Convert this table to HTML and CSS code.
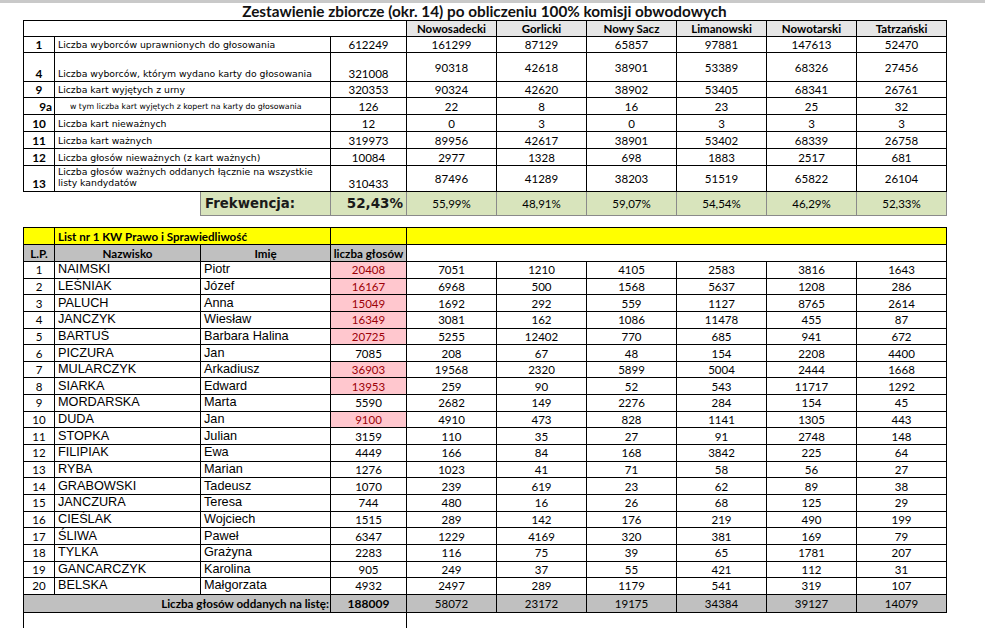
FILE: index.html
```html
<!DOCTYPE html>
<html lang="pl">
<head>
<meta charset="utf-8">
<title>Zestawienie zbiorcze</title>
<link rel="stylesheet" href="styles.css">
</head>
<body>
<div class="topbar"></div>
<div class="sheet">
  <div class="title">Zestawienie zbiorcze (okr. 14) po obliczeniu 100% komisji obwodowych</div>
  <table class="t1">
    <colgroup><col class="c-lp"><col class="c-naz"><col class="c-imie"><col class="c-tot"><col class="c-d"><col class="c-d"><col class="c-d"><col class="c-d"><col class="c-d"><col class="c-d"></colgroup>
    <tr class="h16">
      <td colspan="4"></td>
      <td class="dh">Nowosadecki</td><td class="dh">Gorlicki</td><td class="dh">Nowy Sacz</td><td class="dh">Limanowski</td><td class="dh">Nowotarski</td><td class="dh">Tatrzański</td>
    </tr>
    <tr class="h16">
      <td class="no">1</td><td colspan="2" class="lab">Liczba wyborców uprawnionych do głosowania</td><td>612249</td>
      <td>161299</td><td>87129</td><td>65857</td><td>97881</td><td>147613</td><td>52470</td>
    </tr>
    <tr class="h28">
      <td class="no bot">4</td><td colspan="2" class="lab bot">Liczba wyborców, którym wydano karty do głosowania</td><td class="bot">321008</td>
      <td>90318</td><td>42618</td><td>38901</td><td>53389</td><td>68326</td><td>27456</td>
    </tr>
    <tr class="h16">
      <td class="no">9</td><td colspan="2" class="lab">Liczba kart wyjętych z urny</td><td>320353</td>
      <td>90324</td><td>42620</td><td>38902</td><td>53405</td><td>68341</td><td>26761</td>
    </tr>
    <tr class="h17">
      <td class="no no-r">9a</td><td colspan="2" class="lab sub">w tym liczba kart wyjętych z kopert na karty do głosowania</td><td>126</td>
      <td>22</td><td>8</td><td>16</td><td>23</td><td>25</td><td>32</td>
    </tr>
    <tr class="h17">
      <td class="no">10</td><td colspan="2" class="lab">Liczba kart nieważnych</td><td>12</td>
      <td>0</td><td>3</td><td>0</td><td>3</td><td>3</td><td>3</td>
    </tr>
    <tr class="h17">
      <td class="no">11</td><td colspan="2" class="lab">Liczba kart ważnych</td><td>319973</td>
      <td>89956</td><td>42617</td><td>38901</td><td>53402</td><td>68339</td><td>26758</td>
    </tr>
    <tr class="h17">
      <td class="no">12</td><td colspan="2" class="lab">Liczba głosów nieważnych (z kart ważnych)</td><td>10084</td>
      <td>2977</td><td>1328</td><td>698</td><td>1883</td><td>2517</td><td>681</td>
    </tr>
    <tr class="h25">
      <td class="no bot">13</td><td colspan="2" class="lab two">Liczba głosów ważnych oddanych łącznie na wszystkie<br>listy kandydatów</td><td class="bot">310433</td>
      <td>87496</td><td>41289</td><td>38203</td><td>51519</td><td>65822</td><td>26104</td>
    </tr>
    <tr class="h24 frek">
      <td colspan="2" class="blank"></td>
      <td class="fk-lab">Frekwencja:</td><td class="fk-tot">52,43%</td>
      <td>55,99%</td><td>48,91%</td><td>59,07%</td><td>54,54%</td><td>46,29%</td><td>52,33%</td>
    </tr>
  </table>

  <table class="t2">
    <colgroup><col class="c-lp"><col class="c-naz"><col class="c-imie"><col class="c-tot"><col class="c-d"><col class="c-d"><col class="c-d"><col class="c-d"><col class="c-d"><col class="c-d"></colgroup>
    <tr class="h17 yellow">
      <td></td><td colspan="2" class="list">List nr 1 KW Prawo i Sprawiedliwość</td><td></td><td colspan="6"></td>
    </tr>
    <tr class="h17">
      <td class="gh">L.P.</td><td class="gh">Nazwisko</td><td class="gh">Imię</td><td class="gh">liczba głosów</td><td colspan="6"></td>
    </tr>
    <tr class="r"><td class="lp">1</td><td class="nm">NAIMSKI</td><td class="nm">Piotr</td><td class="hi">20408</td><td>7051</td><td>1210</td><td>4105</td><td>2583</td><td>3816</td><td>1643</td></tr>
    <tr class="r"><td class="lp">2</td><td class="nm">LEŚNIAK</td><td class="nm">Józef</td><td class="hi">16167</td><td>6968</td><td>500</td><td>1568</td><td>5637</td><td>1208</td><td>286</td></tr>
    <tr class="r"><td class="lp">3</td><td class="nm">PALUCH</td><td class="nm">Anna</td><td class="hi">15049</td><td>1692</td><td>292</td><td>559</td><td>1127</td><td>8765</td><td>2614</td></tr>
    <tr class="r"><td class="lp">4</td><td class="nm">JANCZYK</td><td class="nm">Wiesław</td><td class="hi">16349</td><td>3081</td><td>162</td><td>1086</td><td>11478</td><td>455</td><td>87</td></tr>
    <tr class="r"><td class="lp">5</td><td class="nm">BARTUŚ</td><td class="nm">Barbara Halina</td><td class="hi">20725</td><td>5255</td><td>12402</td><td>770</td><td>685</td><td>941</td><td>672</td></tr>
    <tr class="r"><td class="lp">6</td><td class="nm">PICZURA</td><td class="nm">Jan</td><td>7085</td><td>208</td><td>67</td><td>48</td><td>154</td><td>2208</td><td>4400</td></tr>
    <tr class="r"><td class="lp">7</td><td class="nm">MULARCZYK</td><td class="nm">Arkadiusz</td><td class="hi">36903</td><td>19568</td><td>2320</td><td>5899</td><td>5004</td><td>2444</td><td>1668</td></tr>
    <tr class="r"><td class="lp">8</td><td class="nm">SIARKA</td><td class="nm">Edward</td><td class="hi">13953</td><td>259</td><td>90</td><td>52</td><td>543</td><td>11717</td><td>1292</td></tr>
    <tr class="r"><td class="lp">9</td><td class="nm">MORDARSKA</td><td class="nm">Marta</td><td>5590</td><td>2682</td><td>149</td><td>2276</td><td>284</td><td>154</td><td>45</td></tr>
    <tr class="r"><td class="lp">10</td><td class="nm">DUDA</td><td class="nm">Jan</td><td class="hi">9100</td><td>4910</td><td>473</td><td>828</td><td>1141</td><td>1305</td><td>443</td></tr>
    <tr class="r"><td class="lp">11</td><td class="nm">STOPKA</td><td class="nm">Julian</td><td>3159</td><td>110</td><td>35</td><td>27</td><td>91</td><td>2748</td><td>148</td></tr>
    <tr class="r"><td class="lp">12</td><td class="nm">FILIPIAK</td><td class="nm">Ewa</td><td>4449</td><td>166</td><td>84</td><td>168</td><td>3842</td><td>225</td><td>64</td></tr>
    <tr class="r"><td class="lp">13</td><td class="nm">RYBA</td><td class="nm">Marian</td><td>1276</td><td>1023</td><td>41</td><td>71</td><td>58</td><td>56</td><td>27</td></tr>
    <tr class="r"><td class="lp">14</td><td class="nm">GRABOWSKI</td><td class="nm">Tadeusz</td><td>1070</td><td>239</td><td>619</td><td>23</td><td>62</td><td>89</td><td>38</td></tr>
    <tr class="r"><td class="lp">15</td><td class="nm">JANCZURA</td><td class="nm">Teresa</td><td>744</td><td>480</td><td>16</td><td>26</td><td>68</td><td>125</td><td>29</td></tr>
    <tr class="r"><td class="lp">16</td><td class="nm">CIEŚLAK</td><td class="nm">Wojciech</td><td>1515</td><td>289</td><td>142</td><td>176</td><td>219</td><td>490</td><td>199</td></tr>
    <tr class="r"><td class="lp">17</td><td class="nm">ŚLIWA</td><td class="nm">Paweł</td><td>6347</td><td>1229</td><td>4169</td><td>320</td><td>381</td><td>169</td><td>79</td></tr>
    <tr class="r"><td class="lp">18</td><td class="nm">TYLKA</td><td class="nm">Grażyna</td><td>2283</td><td>116</td><td>75</td><td>39</td><td>65</td><td>1781</td><td>207</td></tr>
    <tr class="r"><td class="lp">19</td><td class="nm">GANCARCZYK</td><td class="nm">Karolina</td><td>905</td><td>249</td><td>37</td><td>55</td><td>421</td><td>112</td><td>31</td></tr>
    <tr class="r"><td class="lp">20</td><td class="nm">BELSKA</td><td class="nm">Małgorzata</td><td>4932</td><td>2497</td><td>289</td><td>1179</td><td>541</td><td>319</td><td>107</td></tr>
    <tr class="h18 sum">
      <td colspan="3" class="sum-lab">Liczba głosów oddanych na listę:</td><td class="sum-tot">188009</td>
      <td>58072</td><td>23172</td><td>19175</td><td>34384</td><td>39127</td><td>14079</td>
    </tr>
    <tr class="tail">
      <td colspan="4" class="tail-l"></td><td colspan="6" class="tail-r"></td>
    </tr>
  </table>
</div>
</body>
</html>
```
FILE: styles.css
```css
html, body {
  margin: 0;
  padding: 0;
  background: #ffffff;
}
body {
  font-family: Lato, "Liberation Sans", sans-serif;
  color: #000;
  height: 628px;
  overflow: hidden;
}
.topbar {
  height: 3px;
  background: #c9c9c9;
}
.sheet {
  padding-left: 23px;
}
.title {
  width: 923px;
  height: 17px;
  line-height: 17px;
  text-align: center;
  font-weight: 700;
  font-size: 15.3px;
  color: #111;
}
table {
  border-collapse: collapse;
  table-layout: fixed;
  width: 924px;
}
col.c-lp { width: 31px; }
col.c-naz { width: 146px; }
col.c-imie { width: 130px; }
col.c-tot { width: 76px; }
col.c-d { width: 90px; }

td {
  border: 1px solid #000;
  padding: 0;
  text-align: center;
  vertical-align: middle;
  font-size: 11.5px;
  line-height: 13px;
  white-space: nowrap;
  overflow: hidden;
}
.h16 td { height: 15px; }
.h17 td { height: 16px; }
.h18 td { height: 17px; }
.h24 td { height: 23px; }
.h25 td { height: 24px; }
.h28 td { height: 27px; }

.dh {
  font-weight: 700;
  background: #e6e6e6;
}
.no {
  font-weight: 700;
  font-size: 11.8px;
}
.no-r {
  text-align: right;
  padding-right: 2px;
}
.lab {
  text-align: left;
  padding-left: 3px;
  font-family: "DejaVu Sans", sans-serif;
  font-size: 9.3px;
}
.lab.sub {
  padding-left: 15px;
  font-size: 7.8px;
}
.lab.two {
  vertical-align: top;
  white-space: normal;
  line-height: 11px;
}
.bot {
  vertical-align: bottom;
  padding-bottom: 1px;
}

.frek td {
  background: #d8e4bc;
  border-color: #8a8a8a;
}
.frek td.blank {
  background: transparent;
  border-left-color: transparent;
  border-bottom-color: transparent;
  border-top-color: #000;
}
.fk-lab {
  text-align: left;
  padding-left: 4px;
  font-family: "DejaVu Sans", sans-serif;
  font-weight: 700;
  font-size: 13.3px;
  color: #1a1a1a;
}
.fk-tot {
  text-align: right;
  padding-right: 3px;
  font-family: "DejaVu Sans", sans-serif;
  font-weight: 700;
  font-size: 13.5px;
  color: #1a1a1a;
}

.t2 {
  margin-top: 11px;
}
.yellow td {
  background: #ffff00;
}
.list {
  text-align: left;
  padding-left: 3px;
  font-weight: 700;
  font-size: 11.6px;
}
.gh {
  background: #c0c0c0;
  font-weight: 700;
  font-size: 11.6px;
}
.r td {
  height: 15.65px;
}
.lp {
  font-size: 11.5px;
}
.nm {
  text-align: left;
  padding-left: 3px;
  font-family: "Liberation Sans", Arial, sans-serif;
  font-size: 12.7px;
}
.hi {
  background: #ffc7ce;
  color: #9c0006;
}
.sum td {
  background: #c0c0c0;
}
.sum-lab {
  text-align: right;
  padding-right: 1px;
  font-weight: 700;
  font-size: 11.6px;
}
.sum-tot {
  font-weight: 700;
  font-size: 12px;
}
.tail td {
  height: 30px;
  border-bottom: none;
}
.tail-r {
  border-top: 1px solid #000;
  border-right: none !important;
}
```
